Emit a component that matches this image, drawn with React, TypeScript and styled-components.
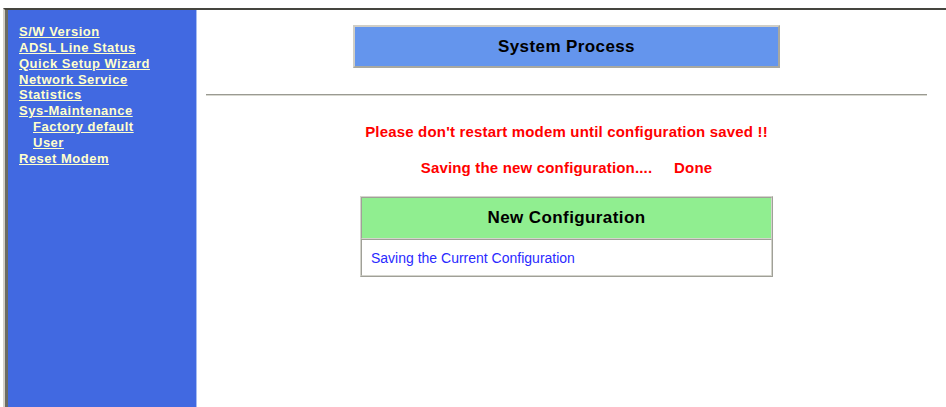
import React from "react";
import styled, { createGlobalStyle } from "styled-components";

const Global = createGlobalStyle`
  html, body {
    margin: 0;
    padding: 0;
    background: #ffffff;
    height: 407px;
    overflow: hidden;
  }
  #root {
    height: 407px;
  }
`;

const Page = styled.div`
  box-sizing: border-box;
  height: 407px;
  padding: 8px 0 0 3px;
  font-family: "Liberation Sans", Arial, sans-serif;
`;

const Frame = styled.div`
  display: flex;
  height: 100%;
  border-top: 2px solid #45453f;
  border-left: 2px solid #d4d0c8;
`;

const Sidebar = styled.nav`
  box-sizing: border-box;
  flex: 0 0 192px;
  background: #4169e1;
  border-left: 3px solid #6b6b63;
  border-right: 1px solid #a6bdf3;
  padding: 14px 0 0 11px;
  display: flex;
  flex-direction: column;
  align-items: flex-start;
`;

const NavLink = styled.a<{ $sub?: boolean }>`
  display: block;
  font-size: 13px;
  font-weight: bold;
  letter-spacing: 0.5px;
  line-height: 15.85px;
  color: #ffffcc;
  text-decoration: underline;
  padding-left: ${(p) => (p.$sub ? "14px" : "0")};
  cursor: pointer;
`;

const Main = styled.main`
  flex: 1;
  box-sizing: border-box;
  padding: 15px 19px 0 9px;
  display: flex;
  flex-direction: column;
  align-items: center;
`;

const TitleBox = styled.div`
  box-sizing: border-box;
  width: 427px;
  height: 43px;
  padding-top: 1px;
  background: #6495ed;
  border: 2px solid;
  border-color: #d0cec6 #a8a8a0 #a8a8a0 #d0cec6;
  display: flex;
  align-items: center;
  justify-content: center;
  font-size: 17px;
  letter-spacing: 0.4px;
  font-weight: bold;
  color: #000;
`;

const Rule = styled.hr`
  align-self: stretch;
  margin: 26px 0 0 0;
  height: 0;
  border: 0;
  border-top: 1px solid #9a9a92;
  border-bottom: 1px solid #d8d8d0;
`;

const Notice = styled.div<{ $gap: number }>`
  margin-top: ${(p) => p.$gap}px;
  line-height: 18px;
  font-size: 15px;
  font-weight: bold;
  letter-spacing: 0.18px;
  color: #ff0000;
  white-space: pre;
`;

const ConfigTable = styled.div`
  box-sizing: border-box;
  width: 413px;
  margin-top: 19px;
  border: 1px solid;
  border-color: #d4d4cc #a0a098 #a0a098 #d4d4cc;
  display: flex;
  flex-direction: column;
`;

const HeadCell = styled.div`
  box-sizing: border-box;
  height: 42px;
  background: #90ee90;
  border: 1px solid;
  border-color: #a0a098 #d4d4cc #d4d4cc #a0a098;
  display: flex;
  align-items: center;
  justify-content: center;
  font-size: 17px;
  letter-spacing: 0.4px;
  font-weight: bold;
  color: #000;
`;

const BodyCell = styled.div`
  box-sizing: border-box;
  height: 37px;
  background: #fff;
  border: 1px solid;
  border-color: #a0a098 #d4d4cc #d4d4cc #a0a098;
  display: flex;
  align-items: center;
  padding-left: 9px;
  font-size: 14px;
  color: #2a2aff;
`;

const links: { label: string; sub?: boolean }[] = [
  { label: "S/W Version" },
  { label: "ADSL Line Status" },
  { label: "Quick Setup Wizard" },
  { label: "Network Service" },
  { label: "Statistics" },
  { label: "Sys-Maintenance" },
  { label: "Factory default", sub: true },
  { label: "User", sub: true },
  { label: "Reset Modem" },
];

export default function App() {
  return (
    <>
      <Global />
      <Page>
        <Frame>
          <Sidebar>
            {links.map((l) => (
              <NavLink key={l.label} $sub={l.sub}>
                {l.label}
              </NavLink>
            ))}
          </Sidebar>
          <Main>
            <TitleBox>System Process</TitleBox>
            <Rule />
            <Notice $gap={27}>Please don't restart modem until configuration saved !!</Notice>
            <Notice $gap={18}>{"Saving the new configuration....     Done"}</Notice>
            <ConfigTable>
              <HeadCell>New Configuration</HeadCell>
              <BodyCell>Saving the Current Configuration</BodyCell>
            </ConfigTable>
          </Main>
        </Frame>
      </Page>
    </>
  );
}
